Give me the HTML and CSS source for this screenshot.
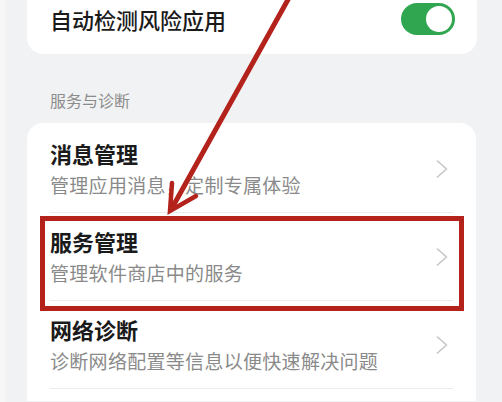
FILE: index.html
```html
<!DOCTYPE html>
<html lang="zh-CN">
<head>
<meta charset="utf-8">
<title>服务与诊断</title>
<link rel="stylesheet" href="styles.css">
</head>
<body>
<div class="screen">
  <div class="card card-top">
    <div class="switch-row">
      <span class="switch-label">自动检测风险应用</span>
      <span class="toggle"><span class="knob"></span></span>
    </div>
  </div>

  <div class="section-title">服务与诊断</div>

  <div class="card card-list">
    <div class="row">
      <div class="row-text">
        <div class="row-title">消息管理</div>
        <div class="row-sub">管理应用消息，定制专属体验</div>
      </div>
      <svg class="chev" viewBox="0 0 12 18" width="12" height="18"><polyline points="1.5,1 10.5,9 1.5,17" fill="none" stroke="#c6c6c6" stroke-width="1.6" stroke-linecap="round" stroke-linejoin="round"/></svg>
    </div>
    <div class="row">
      <div class="row-text">
        <div class="row-title">服务管理</div>
        <div class="row-sub">管理软件商店中的服务</div>
      </div>
      <svg class="chev" viewBox="0 0 12 18" width="12" height="18"><polyline points="1.5,1 10.5,9 1.5,17" fill="none" stroke="#c6c6c6" stroke-width="1.6" stroke-linecap="round" stroke-linejoin="round"/></svg>
    </div>
    <div class="row">
      <div class="row-text">
        <div class="row-title">网络诊断</div>
        <div class="row-sub">诊断网络配置等信息以便快速解决问题</div>
      </div>
      <svg class="chev" viewBox="0 0 12 18" width="12" height="18"><polyline points="1.5,1 10.5,9 1.5,17" fill="none" stroke="#c6c6c6" stroke-width="1.6" stroke-linecap="round" stroke-linejoin="round"/></svg>
    </div>
  </div>
</div>

<div class="highlight-box"></div>
<svg class="arrow" viewBox="0 0 502 402" width="502" height="402">
  <line x1="290" y1="-4" x2="172" y2="208" stroke="#b3221b" stroke-width="5" stroke-linecap="round"/>
  <polyline points="172,183 170,211 196,196" fill="none" stroke="#b3221b" stroke-width="4.5" stroke-linecap="round" stroke-linejoin="miter"/>
</svg>
</body>
</html>
```

FILE: styles.css
```css
html, body {
  margin: 0;
  padding: 0;
}

body {
  width: 502px;
  height: 402px;
  overflow: hidden;
  position: relative;
  background: #f7f7f8;
  font-family: "Noto Sans CJK SC", "Noto Sans", sans-serif;
  color: #1a1a1a;
}

.screen {
  margin-left: 5px;
  height: 402px;
  background: #f1f2f4;
  padding-top: 1px;
  box-sizing: border-box;
  overflow: hidden;
}

.card {
  background: #ffffff;
  border-radius: 16px;
  margin-left: 22px;
  width: 450px;
}

.card-top {
  margin-top: -17px;
  height: 70px;
}

.switch-row {
  height: 70px;
  display: flex;
  align-items: center;
  justify-content: space-between;
  padding: 0 22px 0 23px;
}

.switch-label {
  font-size: 22px;
  font-weight: 500;
  line-height: 30px;
}

.toggle {
  width: 54px;
  height: 32px;
  border-radius: 16px;
  background: #30a650;
  display: flex;
  align-items: center;
  justify-content: flex-end;
  padding-right: 3px;
  box-sizing: border-box;
}

.knob {
  width: 26px;
  height: 26px;
  border-radius: 50%;
  background: #ffffff;
}

.section-title {
  margin: 36px 0 13px 45px;
  font-size: 16px;
  line-height: 20px;
  color: #8c8c8c;
}

.card-list {
  padding-top: 2px;
  width: 449px;
  height: 278px;
  box-sizing: border-box;
  border-radius: 16px 16px 0 0;
}

.row {
  margin: 0 23px;
  height: 87px;
  border-bottom: 1px solid #ececec;
  display: flex;
  align-items: center;
  justify-content: space-between;
  padding-right: 5px;
}

.row-title {
  font-size: 22px;
  font-weight: 700;
  line-height: 28px;
  color: #1a1a1a;
}

.row-sub {
  margin-top: 4px;
  font-size: 19px;
  line-height: 28px;
  color: #8a8a8a;
  letter-spacing: 0.3px;
}

.chev {
  display: block;
}

.highlight-box {
  position: absolute;
  left: 40px;
  top: 216px;
  width: 424px;
  height: 95px;
  box-sizing: border-box;
  border: 5px solid #b3221b;
}

.arrow {
  position: absolute;
  left: 0;
  top: 0;
  pointer-events: none;
}
```
